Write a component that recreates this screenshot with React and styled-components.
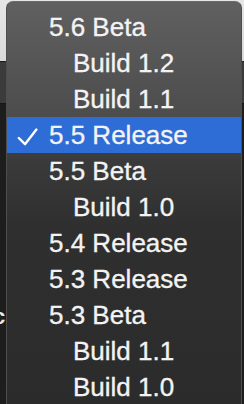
import styled, { createGlobalStyle } from "styled-components"

const GlobalStyle = createGlobalStyle`
  html, body {
    margin: 0;
    padding: 0;
    width: 244px;
    height: 404px;
    overflow: hidden;
    background: #1d1d1d;
  }
  * {
    box-sizing: border-box;
  }
`

const Screen = styled.div`
  position: relative;
  width: 244px;
  height: 404px;
  overflow: hidden;
  display: flex;
  flex-direction: column;
  background: #1d1d1d;
`
const TitleArea = styled.div`
  height: 62px;
  background: linear-gradient(to bottom, #e6e6e6, #dadada);
  border-bottom: 1px solid #1a1a1a;
`
const Toolbar = styled.div`
  height: 42px;
  background: #3b3b3b;
  border-bottom: 1px solid #161616;
`
const Content = styled.div`
  flex: 1;
  display: flex;
  flex-direction: column;
  padding-top: 201px;
`
const BehindText = styled.span`
  font-family: "Liberation Sans", Arial, sans-serif;
  font-weight: 700;
  font-size: 22px;
  line-height: 24px;
  color: #e8e8e8;
  margin-left: -7px;
`

const Menu = styled.div`
  position: absolute;
  top: 1px;
  left: 6px;
  width: 236px;
  height: 420px;
  border: 1px solid #6a6a6a;
  border-bottom: none;
  border-radius: 7px 7px 0 0;
  background: linear-gradient(
    to bottom,
    #606060 0px,
    #4c4c4c 115px,
    #3a3a3a 160px,
    #2f2f2f 225px,
    #2b2b2b 100%
  );
  border-color: #6a6a6a #4e4e4e;
  padding-top: 7px;
  display: flex;
  flex-direction: column;
`
const Row = styled.div`
  height: 36px;
  display: flex;
  align-items: center;
  background: ${p => (p.$selected ? "#2e6cd6" : "transparent")};
`
const CheckSlot = styled.div`
  width: 42px;
  flex-shrink: 0;
  display: flex;
  align-items: center;
  padding-left: 10px;
  padding-top: 3px;
`
const Label = styled.span`
  font-family: "Liberation Sans", Arial, sans-serif;
  font-size: 26px;
  line-height: 36px;
  color: #f3f3f3;
  -webkit-text-stroke: 0.35px #f3f3f3;
  padding-left: ${p => (p.$indent ? "24px" : "0")};
  white-space: nowrap;
`

const items = [
  { label: "5.6 Beta" },
  { label: "Build 1.2", indent: true },
  { label: "Build 1.1", indent: true },
  { label: "5.5 Release", selected: true },
  { label: "5.5 Beta" },
  { label: "Build 1.0", indent: true },
  { label: "5.4 Release" },
  { label: "5.3 Release" },
  { label: "5.3 Beta" },
  { label: "Build 1.1", indent: true },
  { label: "Build 1.0", indent: true },
]

const Check = () => (
  <svg width="21" height="18" viewBox="0 0 21 18" fill="none">
    <path
      d="M1.8 10 L8 16.2 L19.4 1.6"
      stroke="#ffffff"
      strokeWidth="2.4"
      strokeLinecap="round"
      strokeLinejoin="round"
    />
  </svg>
)

const App = () => {
  return (
    <>
      <GlobalStyle />
      <Screen>
        <TitleArea />
        <Toolbar />
        <Content>
          <BehindText>c</BehindText>
        </Content>
        <Menu>
          {items.map((item, i) => (
            <Row key={i} $selected={item.selected}>
              <CheckSlot>{item.selected && <Check />}</CheckSlot>
              <Label $indent={item.indent}>{item.label}</Label>
            </Row>
          ))}
        </Menu>
      </Screen>
    </>
  )
}

export default App
